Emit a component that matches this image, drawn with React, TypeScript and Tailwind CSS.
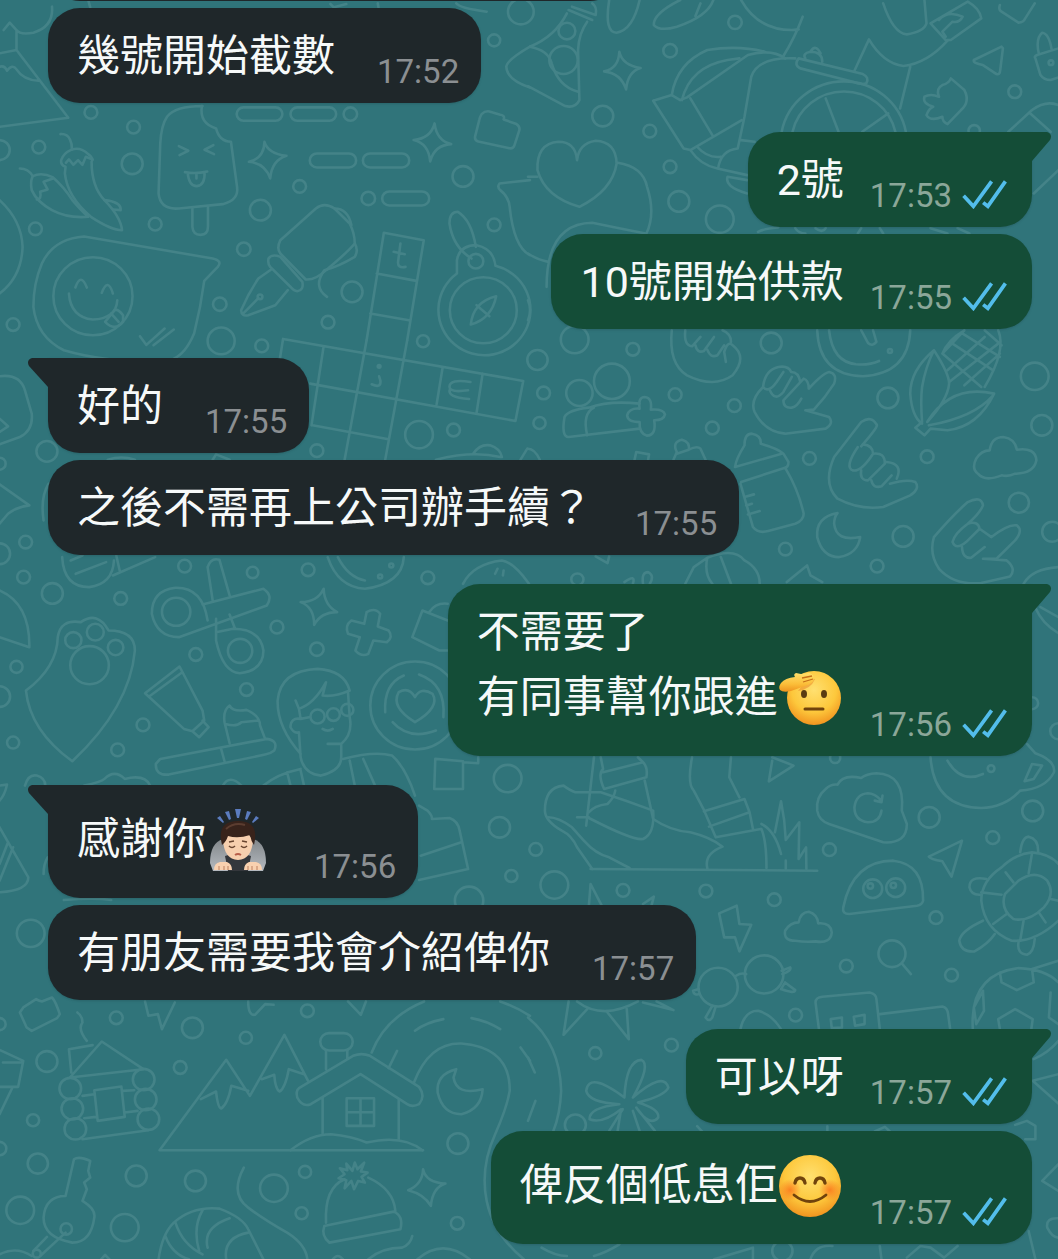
import type { ReactNode } from "react";

type Circle = [number, number, number];

type Tile = {
  x: number;
  y: number;
  circles: Circle[];
  paths: string[];
};

// doodle wallpaper, split in tiles that are drawn at three times their size
const tiles: Tile[] = [
  {
    x: 0,
    y: 0,
    circles: [
      [270, 337, 19], [396, 381, 19], [116, 441, 19], [392, 491, 31], [1037, 342, 20], [887, 559, 19],
      [1090, 595, 20], [1370, 529, 31], [771, 630, 31], [106, 686, 19], [460, 672, 19], [722, 747, 20],
      [1462, 674, 19], [1462, 121, 18], [651, 912, 20], [655, 1022, 40], [775, 1037, 19], [971, 966, 19],
      [1042, 875, 31], [1252, 1023, 18], [40, 973, 19], [0, 450, 30], [1541, 35, 38], [276, 888, 117],
      [1430, 930, 99], [1408, 783, 22], [770, 890, 7],
    ],
    paths: [
      "M721 322H816a20 20 0 0 1 0 40H721a20 20 0 0 1 0-40Z M880 322H975a20 20 0 0 1 0 40H880a20 20 0 0 1 0-40Z",
      "M938 460H1033a21 21 0 0 1 0 42H938a21 21 0 0 1 0-42Z M1095 460H1190a21 21 0 0 1 0 42H1095a21 21 0 0 1 0-42Z",
      "M1152 574H1249a21 21 0 0 1 0 42H1152a21 21 0 0 1 0-42Z",
      "M783 425Q793 460 848 467Q805 480 800 535Q785 490 737 485Q782 475 783 425Z",
      "M1286 370Q1292 422 1335 432Q1285 435 1273 484Q1268 430 1224 420Q1275 415 1286 370Z",
      "M600 318Q520 318 495 350Q478 375 475 430L470 580Q475 630 530 625L660 612Q708 600 702 560L684 425Q650 425 640 385Q590 370 598 318",
      "M570 625V680Q572 704 594 704Q616 704 616 680V618",
      "M530 438L558 452L532 465M632 435L606 449L634 462M548 516Q580 522 614 514M556 518Q560 558 583 558Q608 555 606 516M582 520V535",
      "M1425 342Q1435 332 1448 334L1480 344Q1495 346 1490 358L1528 372Q1540 380 1536 392L1522 436Q1518 448 1504 444L1415 424Q1403 420 1406 408L1418 360Q1420 350 1425 342Z",
      "M180 402Q200 400 208 418Q214 430 214 448M60 505Q85 505 98 528",
      "M195 500Q180 495 182 480Q188 460 214 448Q240 440 262 462Q280 475 272 485Q272 560 310 600Q358 650 362 690Q330 690 270 650Q200 590 193 520Z",
      "M196 488L205 478L218 494L232 480L245 494L255 470L275 478",
      "M98 528Q125 515 158 532Q190 560 215 600Q240 630 262 650Q200 655 155 630Q110 605 95 570Q90 545 98 528",
      "M110 598Q125 598 120 575L142 568L130 545L158 535M310 600Q360 605 358 630L335 628",
      "M330 1078Q250 1068 190 1050Q110 1010 100 920Q100 850 125 790Q160 715 250 709L630 775Q660 782 645 800L605 842Q595 920 575 1000Q550 1060 515 1075",
      "M224 862Q240 815 258 862M302 878Q320 830 335 880M205 880Q210 950 275 958Q345 955 348 900",
      "M312 965L340 930Q350 925 365 945V965Q340 995 312 965M330 940L352 965M415 1008L434 1034L488 985M455 1035L515 988",
      "M935 625Q960 605 990 625L1035 670Q1050 700 1050 730Q1030 755 965 810Q935 840 905 838L830 760Q818 745 830 720Z",
      "M990 625Q1030 625 1040 675M1050 730Q1062 750 1050 770Q1000 800 960 810Q925 860 968 890",
      "M795 775Q805 760 830 770L895 845Q900 870 880 873Q870 872 862 862L800 800Q792 790 795 775Z",
      "M803 808L765 835Q735 880 714 930Q715 950 735 945L815 915L852 870M720 940L765 894",
      "M1085 1020L1136 698L1254 720L1205 1020M1115 820L1232 842M1096 940L1210 960",
      "M1185 730L1178 785Q1176 805 1200 800M1165 755L1198 762",
      "M1352 820A136 136 0 1 0 1466 797Q1460 745 1410 735Q1360 735 1352 780V820",
      "M1395 775Q1340 740 1330 670Q1330 635 1355 635Q1395 660 1408 740",
      "M1468 888Q1400 905 1393 973Q1455 955 1468 888ZM1410 915L1448 948",
      "M1568 540L1478 550Q1470 560 1480 570Q1505 590 1508 620Q1520 740 1568 765",
      "M0 160L50 150V90L30 68L12 90M50 90Q60 105 100 98Q160 80 155 20M50 150L203 353L0 380M0 200Q15 195 22 212Q38 190 50 208Q70 240 115 242",
      "M0 600Q65 660 68 740Q65 830 0 880M262 0L268 22M978 12L988 22L1025 12M1118 10L1120 22M1350 10Q1360 25 1440 35",
      "M1568 140Q1500 180 1498 200Q1500 240 1568 262",
    ],
  },
  {
    x: 528,
    y: 0,
    circles: [
      [420, 152, 20], [612, 67, 20], [221, 348, 31], [360, 393, 19], [420, 500, 19], [446, 604, 31],
      [567, 657, 41], [1439, 275, 19], [1319, 392, 17], [115, 93, 25], [105, 180, 42], [1546, 188, 7],
    ],
    paths: [
      "M120 30L190 60M130 20L200 45Q205 20 190 10M175 65Q150 100 148 150L152 300Q140 325 110 318L0 258M115 40Q80 110 5 140Q60 150 70 190Q90 260 148 275",
      "M270 155Q278 195 333 204Q295 215 290 268Q275 220 225 214Q268 205 270 155Z",
      "M240 0Q225 98 262 98Q310 90 330 0M450 0Q370 40 372 75Q390 95 440 80Q530 50 548 0M510 10L495 48",
      "M630 0Q680 90 780 90L800 88M812 50Q790 110 755 168",
      "M425 285Q440 190 530 150Q620 135 700 155M455 300Q480 200 590 180L625 175",
      "M370 302L425 285L450 300L470 292L650 165Q720 145 760 175M370 302L460 445L480 450L632 360M480 295L545 405",
      "M790 175Q680 170 660 230L640 350L620 445Q570 450 562 505M480 450Q510 495 560 505L648 525M500 440Q530 475 570 470M630 420L670 425M648 540L590 530Q580 560 648 580",
      "M800 175L990 222Q1010 232 1000 250Q985 255 960 245L805 205Q785 195 800 175ZM820 175Q810 160 835 155Q870 155 870 185M835 155Q850 130 865 160",
      "M750 395A187 187 0 0 1 1117 395M782 395A156 156 0 0 1 1086 395M880 295L918 395M1065 340L988 395",
      "M965 212L1008 118Q1050 190 1110 198Q1180 190 1240 122M1130 200L1100 325M1050 10Q1080 100 1120 103Q1170 95 1178 70L1172 0",
      "M1190 70L1300 5Q1335 25 1340 55L1250 120H1235L1190 70M1215 60Q1240 30 1285 50Q1275 70 1255 65L1225 95L1235 110",
      "M1395 15Q1390 30 1400 35L1450 68Q1465 68 1470 55L1498 10",
      "M1400 140L1318 180Q1315 190 1345 195L1385 222Q1395 225 1396 210L1404 145Z",
      "M1568 145L1505 165Q1495 170 1500 175L1515 225Q1525 240 1545 240L1568 232M1510 160Q1500 115 1520 98Q1540 100 1548 148",
      "M1250 235L1290 270Q1308 305 1280 330L1240 372Q1225 365 1225 350Q1190 365 1178 345Q1185 325 1198 320Q1165 310 1172 290Q1190 280 1215 290Q1205 265 1225 255Q1245 250 1250 235Z",
      "M1420 395L1490 330Q1530 300 1568 315M1485 340L1545 395M1495 580L1568 510",
      "M145 480Q140 425 90 425Q25 430 28 510Q50 590 152 620Q250 570 262 490Q260 425 200 422Q150 430 145 480Z",
      "M265 488Q340 500 352 560Q378 640 350 700M0 530H28M55 860Q55 670 190 668Q270 685 348 700M0 760Q30 780 60 785M0 900Q12 930 0 960",
      "M680 695Q700 685 740 682M790 684Q800 700 820 700M850 684Q870 700 880 684M975 700L985 684M1040 684L1050 700M1190 684L1240 700M1270 684L1305 700",
    ],
  },
  {
    x: 0,
    y: 340,
    circles: [[140, 333, 31], [1240, 283, 41], [1342, 269, 19], [938, 331, 19], [77, 605, 19], [0, 370, 18], [0, 640, 31], [1122, 78, 4]],
    paths: [
      "M828 60L838 -4L1548 122L1525 242L918 130M925 255L1150 297M958 18L922 255M1085 0L1020 358M1205 0L1140 358M1310 80L1292 192M1428 100L1410 218",
      "M1392 125Q1330 115 1330 140Q1332 158 1385 150M1332 145Q1320 172 1388 176M1100 132Q1128 145 1126 122L1122 108",
      "M0 108Q60 100 75 150L95 220Q100 270 60 290L0 312M0 235L25 258L0 275M0 432L88 495Q50 500 25 520L0 550",
      "M130 540Q120 470 145 430M320 358Q360 345 400 358M630 358L640 342L680 358M1400 340Q1420 310 1450 315Q1480 325 1485 350M1290 358Q1400 330 1480 350M1540 358L1560 325",
    ],
  },
  {
    x: 528,
    y: 320,
    circles: [
      [138, 58, 41], [310, 87, 19], [719, 68, 31], [28, 119, 30], [46, 218, 19], [34, 308, 18], [435, 223, 19],
      [610, 256, 19], [545, 323, 19], [152, 218, 39], [248, 183, 53], [1064, 233, 31], [1498, 168, 41],
      [1519, 315, 31], [832, 414, 19], [1180, 409, 19], [1451, 547, 30], [1109, 648, 31], [761, 686, 19],
      [1032, 737, 19], [1550, 634, 30], [146, 777, 18], [1070, 92, 6], [1490, 1148, 18], [1568, 1232, 24],
    ],
    paths: [
      "M330 250Q240 240 180 262Q120 268 108 290Q98 350 120 350L330 325M175 345Q160 280 195 262",
      "M330 265Q325 230 345 230Q368 232 363 268Q400 265 405 282Q402 300 373 300Q380 345 352 346Q328 340 330 305Q295 305 293 285Q300 262 330 265Z",
      "M425 30Q415 130 470 165Q550 205 605 165Q650 110 605 75Q590 60 580 95L585 125M465 30Q460 75 485 78L510 50M495 75Q500 100 520 92L550 50M530 88Q540 115 560 105L580 75M575 30Q600 40 600 65",
      "M695 200Q700 150 740 140Q770 135 778 155M695 200Q655 240 670 275Q700 335 760 340L880 325Q905 310 890 290L820 270L845 268Q880 230 905 190Q915 160 890 155Q870 160 830 205Q830 180 815 175L755 240Q755 265 780 262Q795 260 808 235M695 200Q710 220 735 185L755 155M715 210Q730 245 755 215L780 170M778 155Q800 155 805 185",
      "M855 30Q860 165 990 168Q1125 160 1130 30M890 30Q900 125 970 132Q1010 135 1038 122M985 30L1005 68Q1018 80 1030 65L1020 30",
      "M1165 310Q1135 290 1130 220Q1130 150 1200 90Q1245 160 1245 190Q1240 240 1180 305Q1250 190 1378 220Q1330 320 1240 330L1190 325L1172 345L1145 322L1165 305Q1160 240 1165 200Q1175 140 1200 90M1185 315Q1320 290 1375 225",
      "M1225 100L1290 30M1240 150L1350 50M1245 185L1390 70M1290 195L1395 100M1225 100L1340 200M1255 70L1375 150M1285 40L1395 110M1350 30L1400 75M1225 100Q1240 60 1290 30M1390 30Q1415 90 1350 200",
      "M985 378Q1040 315 1030 312Q1015 285 985 305L905 410Q870 490 915 535Q980 570 1050 560L1130 525Q1160 505 1145 485Q1120 475 1070 490",
      "M975 380Q935 440 960 450Q985 455 1020 400Q1020 375 990 372M985 450Q980 480 1005 480L1055 430Q1055 395 1020 400M1015 480Q1020 505 1045 498L1075 465M1090 475Q1110 430 1060 425",
      "M640 375Q640 340 662 340Q690 345 688 370Q740 385 755 400L770 425Q770 440 760 442L630 485M612 440L750 400M640 375Q615 415 612 440M760 442Q800 510 815 580Q815 600 790 610L710 632Q680 640 665 620L628 490M640 530L668 522M645 555L662 550M650 582L685 572",
      "M430 418L440 395Q425 365 455 358Q480 365 475 388L440 400M475 388Q500 375 510 385L525 418M315 418L320 395L358 402L355 418M0 385Q20 385 35 418",
      "M1330 460Q1310 445 1325 415Q1340 390 1365 390Q1370 350 1405 350Q1440 355 1445 388Q1500 380 1503 420Q1495 460 1440 460Q1420 470 1400 465Q1350 485 1330 460Z",
      "M915 578Q850 590 855 650Q870 710 920 710Q975 700 982 650Q910 665 905 610Q905 590 915 578Z",
      "M1215 745Q1185 700 1200 650Q1260 580 1300 545Q1340 525 1345 555Q1335 580 1300 610Q1260 640 1255 665Q1265 690 1295 665L1335 625M1300 610Q1330 600 1335 625L1370 650Q1420 610 1445 615Q1465 630 1440 660L1385 715H1345L1415 720Q1445 745 1425 768L1340 788Q1260 795 1215 745M1283 680Q1285 715 1310 712L1350 680",
      "M1465 790Q1490 745 1568 740M465 790L490 740L530 712Q610 680 640 720Q685 745 685 790M530 712Q520 760 545 790M570 710L600 790M765 785L825 735L835 765L870 785",
      "M285 785Q320 760 310 790M340 790Q335 755 355 755Q375 765 360 790M200 708L235 728L240 708",
      "M1500 862Q1520 910 1568 938M1515 860L1568 890",
    ],
  },
  {
    x: 0,
    y: 540,
    circles: [
      [71, 110, 19], [156, 159, 31], [547, 77, 19], [358, 174, 19], [748, 96, 17], [912, 88, 19], [1266, 112, 19],
      [820, 260, 19], [580, 342, 19], [938, 326, 20], [730, 447, 19], [424, 553, 19], [349, 628, 19], [50, 379, 18],
      [40, 606, 18], [0, 468, 31], [1502, 714, 41], [1478, 860, 31], [1513, 1006, 18], [1388, 1080, 42],
      [522, 214, 42], [711, 331, 36], [283, 275, 25], [218, 299, 24], [343, 321, 23], [266, 374, 57],
      [1228, 495, 132], [940, 528, 21], [987, 522, 19], [1028, 508, 18], [1125, 108, 6], [1158, 75, 6], [92, 1178, 41],
    ],
    paths: [
      "M185 50Q190 140 265 140Q335 130 338 60M210 60L245 45M225 100L315 65M345 45L355 90M335 105L460 50",
      "M615 240Q600 140 520 142Q450 150 450 220Q465 290 530 290L790 195Q810 165 780 145L600 192M630 180L615 80Q625 50 650 58L680 165M640 235V300Q660 395 710 398Q780 390 780 330Q770 265 690 265L640 275M680 222L695 262",
      "M958 145Q960 195 998 215Q950 215 930 253Q930 200 890 185Q940 185 958 145Z",
      "M1085 215Q1110 200 1125 220L1118 258L1150 270Q1165 290 1145 305L1105 300L1090 340Q1070 350 1052 330L1065 290L1030 280Q1020 255 1040 240L1078 250Z",
      "M1325 330H1300L1220 290L1250 210L1325 240M1270 215Q1290 185 1325 190",
      "M215 662Q90 570 78 450Q170 380 172 290Q180 235 240 245Q290 210 322 270Q400 270 400 330Q385 500 215 662Z",
      "M532 378L430 458L545 565L570 572L605 540L600 510ZM442 468L540 395M570 572L590 590L618 560L600 540",
      "M475 655L790 595Q825 600 812 630Q800 640 785 642L500 702Q460 705 462 670ZM655 625L665 662M680 608L665 545Q660 510 680 495Q690 515 730 508Q770 525 770 555L785 595M668 550Q700 560 715 545L765 540",
      "M890 640Q820 560 822 480Q830 390 940 385Q1020 390 1035 450Q990 470 955 465L965 425Q930 490 885 505L875 480M1030 455L1035 530Q1045 580 1010 610H970M915 530L890 535Q860 530 860 560Q870 580 885 575L890 650Q900 700 950 705Q1010 690 1010 650V615M955 565Q970 575 985 565M885 505L890 535",
      "M780 735Q820 700 890 685M850 695L860 735M890 690L900 735M1015 655Q1110 630 1160 645Q1200 680 1228 765M1035 660L1050 735M1075 655L1110 735",
      "M1228 470Q1210 438 1180 455Q1155 500 1228 545Q1303 500 1280 460Q1245 438 1228 470ZM1140 515Q1135 430 1195 405M1240 402Q1320 430 1312 530M1162 545Q1210 600 1290 570",
      "M1288 655L1370 662V745H1285ZM1370 665L1415 668V650",
      "M250 735Q300 725 310 715Q340 685 370 715Q430 700 445 735M75 735Q85 700 110 705Q135 712 135 735M660 735Q680 700 715 735M0 735L22 732Q15 765 0 780M0 860L85 1010Q85 1050 0 1055M25 905L0 970M40 920L0 1020",
      "M1240 795L1265 810Q1280 825 1278 835L1330 832Q1355 840 1360 870L1385 985L1240 1018M1245 945L1365 905M0 150Q90 190 88 320L0 290",
      "M970 50Q1000 140 1080 145Q1190 130 1195 50M1000 50Q1030 110 1080 120M1370 130Q1400 70 1485 60Q1520 65 1565 130M1465 100L1472 85M1488 105L1490 90M130 1000Q130 970 142 950M190 1078Q280 1070 330 1078",
    ],
  },
  {
    x: 528,
    y: 740,
    circles: [
      [23, 326, 19], [78, 433, 41], [281, 449, 19], [526, 451, 19], [728, 477, 19], [891, 327, 19], [1186, 230, 31],
      [1492, 211, 31], [1374, 291, 19], [1206, 531, 19], [941, 676, 19], [1252, 703, 19], [791, 823, 19],
      [1019, 444, 28], [1087, 441, 28], [1012, 436, 8], [1080, 434, 8], [1076, 639, 40], [562, 739, 58],
      [698, 701, 57], [1369, 84, 10], [908, 52, 15],
    ],
    paths: [
      "M172 255L195 50M215 50L222 85Q205 100 225 145L350 110Q355 80 340 65L325 50M222 95L340 65",
      "M145 230H180M180 215Q195 195 235 190Q255 170 258 150M190 385L145 320Q130 285 100 270Q50 240 50 210Q50 140 105 135Q125 150 140 155H215Q290 180 370 210Q375 280 340 295Q310 300 180 232",
      "M345 120L370 235Q420 270 480 275Q540 290 575 318Q520 340 530 382M60 230Q90 230 130 260L165 300Q200 340 240 350L300 382M185 385L855 390",
      "M485 50Q470 130 490 150L520 208L555 290L688 265M600 50L595 110L625 170M520 212L640 175L655 215L535 258M655 215L665 265M690 265Q705 300 705 382",
      "M690 250Q730 270 748 340M730 275L748 182Q760 240 762 298L802 245L800 355L822 320L823 385M762 360V385",
      "M880 145Q850 170 855 210Q860 240 890 250L1050 305Q1120 310 1120 250L1105 210Q1115 100 1030 98Q1000 100 985 112Q930 100 915 132Q895 130 880 145Z",
      "M1045 210Q1040 245 1005 245Q965 240 965 200Q970 160 1005 158Q1025 158 1045 180M1048 165L1045 185L1025 180",
      "M1190 50Q1200 200 1340 202Q1410 200 1455 150Q1530 145 1555 95Q1560 60 1500 38L1475 10M1240 60Q1280 130 1345 100M1490 70L1520 75L1495 115L1468 122Z",
      "M722 50L785 75L712 122L722 60M1283 300L1185 348Q1190 355 1225 362L1252 408Z",
      "M932 500Q960 360 1080 360Q1170 370 1168 480Q1165 492 1150 495L950 520Q928 520 932 500Z",
      "M565 518L617 495L625 550L660 552L625 632L612 590H580Z",
      "M790 600Q755 600 760 570Q775 545 800 545Q805 515 830 513Q855 520 858 548Q895 545 898 575Q895 610 850 602Q820 605 790 600Z",
      "M1105 668L1132 700M615 705Q630 695 645 700M750 690L775 680Q780 690 752 700M748 745L760 725L790 748Q790 760 748 745M545 795L525 830Q535 845 545 830L555 797M505 745L488 750Q490 765 508 760",
      "M180 495L185 430L218 495M340 490L372 468L365 495M120 782L105 882L175 805M145 782Q220 840 325 782M235 815L298 895L292 805M380 782L430 808L340 785",
      "M1568 370Q1545 340 1490 335Q1440 340 1400 380Q1340 420 1340 480Q1350 570 1430 600Q1500 605 1568 540",
      "M1410 460L1450 420Q1500 385 1535 420Q1560 460 1525 500Q1480 545 1435 535Q1395 505 1410 460Z",
      "M1412 395L1435 425M1490 338L1480 398M1340 455L1400 462M1375 550L1415 520M1465 540L1455 600M1510 515L1530 545M1545 475L1568 480",
      "M1455 335Q1460 290 1480 288Q1510 295 1508 335M1355 415Q1305 405 1305 440Q1310 465 1340 462M1345 540Q1280 570 1275 600Q1280 635 1320 632Q1360 610 1380 580M1450 605Q1445 640 1475 642Q1495 635 1498 595",
      "M1315 865Q1305 700 1450 682Q1530 685 1568 725M1395 695L1400 725L1445 748L1495 725L1490 685L1568 660M1395 865L1390 835L1440 805L1492 835L1488 865M1345 750L1348 810L1325 850L1318 800ZM1545 755L1540 830L1568 850",
      "M860 865L850 785Q850 770 870 768L1010 755Q1030 760 1030 775L1040 865M895 835L928 830V860L898 862ZM963 828L995 822V850L967 855ZM1040 820L1225 797Q1240 800 1242 820L1248 865M628 865Q640 810 680 810Q720 820 748 865",
    ],
  },
  {
    x: 0,
    y: 980,
    circles: [
      [345, 111, 19], [570, 141, 31], [728, 171, 18], [910, 90, 19], [534, 260, 19], [140, 242, 31], [99, 418, 18],
      [113, 548, 30], [404, 585, 31], [579, 600, 31], [811, 622, 41], [903, 573, 18], [893, 697, 18],
      [1353, 727, 19], [370, 740, 41], [61, 688, 41], [1355, 488, 31], [0, 503, 20], [197, 744, 17], [0, 130, 18],
      [209, 323, 32], [215, 384, 32], [224, 444, 32], [426, 296, 32], [432, 356, 32], [440, 415, 32], [110, 818, 12],
    ],
    paths: [
      "M70 80L108 55Q115 60 125 62L155 50Q165 60 178 100L170 112L95 150L80 140L60 95ZM230 95Q245 105 245 125Q230 145 258 180",
      "M208 290L302 182L425 265ZM212 275L205 205L275 193M245 345L280 340M250 412L285 408M280 328L360 317L370 408L290 420ZM362 330L398 328M370 395L408 390M245 475L440 448",
      "M430 62L440 105L468 100L480 145L518 65M735 62Q735 105 755 102L785 70L810 72M1030 62L1068 102L1083 62",
      "M912 300L842 162L740 345L670 237L473 508H1252M595 355L640 332Q645 380 655 383Q675 370 685 315L735 330M775 295L812 282Q815 325 828 332Q845 320 855 265L900 280",
      "M885 322L1045 225Q1070 215 1095 225L1240 318Q1260 345 1240 370Q1220 380 1205 370L1067 280L920 370Q895 380 880 350Q875 330 885 322ZM955 350V460M1180 355V475M965 265V212M1028 235V208",
      "M974 157H1018a26 26 0 0 1 0 52H974a26 26 0 0 1 0-52ZM1026 352H1107V435H1026ZM1067 352V435M1026 394H1107M860 508Q920 460 980 460Q1040 465 1085 485Q1190 460 1250 508",
      "M1100 215Q1140 110 1255 62M1150 262L1175 210M1225 305Q1270 185 1365 188Q1510 200 1508 330Q1500 380 1465 460Q1420 560 1440 660Q1460 760 1550 835M1228 150Q1260 125 1312 115M1395 112Q1440 120 1480 145M1480 62Q1530 80 1568 105M1540 200L1568 240",
      "M1350 265Q1290 280 1295 335Q1310 400 1365 400Q1425 385 1428 325Q1350 345 1342 290Z",
      "M0 207L70 240L55 318H0M10 245H68M38 320L0 400",
      "M195 645L220 535Q235 525 268 540L262 570L268 590L250 605L258 625L245 660Q285 685 280 710Q270 785 215 785Q130 770 130 710Q135 645 195 645ZM100 810L140 768M120 825L195 755M0 820Q50 795 95 825",
      "M470 835Q480 760 515 725Q570 675 650 683Q720 710 735 745L780 835M490 765Q510 820 560 835M520 725Q540 790 600 820M600 688Q570 740 590 810M680 712Q600 740 615 800M735 755Q660 770 670 835",
      "M722 560Q680 640 735 680Q780 715 850 755Q905 790 910 835",
      "M965 725Q960 620 1020 595M1090 590Q1165 625 1170 690M970 733L1165 692Q1195 705 1185 745L975 785Q950 765 960 735Z",
      "M1043 570L1050 545L1058 565L1078 545L1068 572L1088 575L1070 588L1080 605L1060 600L1048 625L1040 600L1020 622L1025 598L1002 592L1020 580L1006 562L1028 568L1025 548Z",
      "M1252 565Q1260 605 1318 608Q1280 620 1275 675Q1255 640 1208 628Q1250 610 1252 565Z",
      "M1090 835Q1130 800 1190 800Q1215 790 1220 765M1235 835Q1310 770 1390 835M985 835Q1000 815 1015 835M300 835L312 822L325 835",
    ],
  },
  {
    x: 528,
    y: 980,
    circles: [[424, 193, 19], [199, 217, 18], [140, 432, 31], [752, 810, 30]],
    paths: [
      "M0 110Q95 190 98 330Q95 400 75 450M0 230L20 275M22 360L0 420",
      "M285 350Q290 240 335 237Q365 250 310 350Q400 270 415 320Q405 345 325 365Q390 385 385 410Q360 440 320 380L375 450M310 390L330 450M265 450L275 385Q220 430 182 415Q180 380 270 370Q180 365 172 330Q180 270 285 350M280 385L240 450",
      "M1568 280L1492 300L1568 368M1495 235Q1540 215 1568 180M1440 432L1475 420L1500 435V475H1470M1568 550L1520 600L1568 630M1568 712Q1530 710 1535 740Q1550 770 1568 770M1480 750L1500 835",
      "M40 800Q80 825 115 825M195 825Q230 815 270 790M550 835L665 800V835M835 835Q850 790 900 795M1040 795L1045 835M1120 830L1160 795L1190 800L1230 830L1270 795M500 436L515 452M885 436V452M1025 452L1055 438L1070 452",
    ],
  },
];

function Wallpaper() {
  return (
    <svg
      aria-hidden="true"
      viewBox="0 0 1058 1259"
      preserveAspectRatio="xMidYMin slice"
      className="absolute inset-0 h-full w-full text-[#448388]"
      fill="none"
      stroke="currentColor"
      strokeWidth="2.6"
      strokeLinejoin="round"
      strokeLinecap="round"
    >
      {tiles.map((tile) => (
        <g key={`${tile.x}-${tile.y}`} transform={`translate(${tile.x} ${tile.y}) scale(0.338 0.3333)`}>
          {tile.circles.map(([cx, cy, r]) => (
            <circle key={`${cx}-${cy}`} cx={cx} cy={cy} r={r} vectorEffect="non-scaling-stroke" />
          ))}
          {tile.paths.map((d) => (
            <path key={d} d={d} vectorEffect="non-scaling-stroke" />
          ))}
        </g>
      ))}
    </svg>
  );
}

function Ticks() {
  return (
    <svg
      role="img"
      aria-label="已讀"
      viewBox="0 0 132 86"
      className="mb-1 h-[29px] w-[45px]"
      fill="none"
      stroke="#53bdeb"
      strokeWidth="11"
      strokeLinecap="butt"
    >
      <path d="M4 47L33 78L87 4" />
      <path d="M62 67L76 78L128 4" />
    </svg>
  );
}

function FaceGradient({ id }: { id: string }) {
  return (
    <radialGradient id={id} cx="0.5" cy="0.35" r="0.68">
      <stop offset="0" stopColor="#ffe070" />
      <stop offset="0.6" stopColor="#fdc83c" />
      <stop offset="1" stopColor="#f08e1c" />
    </radialGradient>
  );
}

function SmileEmoji() {
  return (
    <svg role="img" aria-label="😊" viewBox="0 0 66 64" className="h-[64px] w-[66px]">
      <defs>
        <FaceGradient id="smile" />
        <radialGradient id="blush">
          <stop offset="0" stopColor="#fa6a18" stopOpacity="0.75" />
          <stop offset="1" stopColor="#fa6a18" stopOpacity="0" />
        </radialGradient>
      </defs>
      <circle cx="32" cy="32" r="31" fill="url(#smile)" />
      <circle cx="12" cy="36" r="11" fill="url(#blush)" />
      <circle cx="52" cy="36" r="11" fill="url(#blush)" />
      <g fill="none" stroke="#70430c" strokeLinecap="round">
        <path d="M17 29Q18 24 22 24Q26 24 27 29" strokeWidth="3.4" />
        <path d="M37 29Q38 24 42 24Q46 24 47 29" strokeWidth="3.4" />
        <path d="M16 41Q32 54 48 41" strokeWidth="2.8" />
      </g>
    </svg>
  );
}

function SaluteEmoji() {
  return (
    <svg role="img" aria-label="🫡" viewBox="0 0 66 64" className="h-[64px] w-[66px]">
      <defs>
        <FaceGradient id="salute" />
        <linearGradient id="hand" x1="0" y1="0" x2="0" y2="1">
          <stop offset="0" stopColor="#ffe06a" />
          <stop offset="0.6" stopColor="#fbbd38" />
          <stop offset="1" stopColor="#ee931f" />
        </linearGradient>
      </defs>
      <circle cx="36" cy="32" r="27" fill="url(#salute)" />
      <path d="M20 25Q33 23 37 13L30 12Z" fill="#e8892b" opacity="0.55" />
      <path
        d="M3 17Q0 21 2 24Q5 27 13 25L27 20Q35 18 36 13Q36 8 31 7L23 8L18 7Q15 8 17 11Q7 12 3 17Z"
        fill="url(#hand)"
      />
      <path d="M24 12L34 10M25 16L35 13" stroke="#c56f16" strokeWidth="1.3" fill="none" />
      <ellipse cx="26" cy="28" rx="3" ry="4" fill="#5a3c12" />
      <ellipse cx="46" cy="28" rx="3" ry="4" fill="#5a3c12" />
      <path d="M27 43H45" stroke="#70430c" strokeWidth="3" strokeLinecap="round" />
    </svg>
  );
}

function BowEmoji() {
  return (
    <svg role="img" aria-label="🙇🏻" viewBox="0 0 66 64" className="h-[64px] w-[66px]">
      <defs>
        <linearGradient id="sleeve" x1="0" y1="0" x2="0" y2="1">
          <stop offset="0" stopColor="#82878a" />
          <stop offset="1" stopColor="#b5bac0" />
        </linearGradient>
      </defs>
      <g fill="#5b7cbf">
        <path d="M29 1H35L33 10H31Z" />
        <path d="M19 4L23 3L25 11L23 12Z" />
        <path d="M45 4L41 3L39 11L41 12Z" />
        <path d="M11 10L14 8L18 14L17 15Z" />
        <path d="M53 10L50 8L46 14L47 15Z" />
      </g>
      <path d="M17 31Q4 35 4 55L7 63H57L60 55Q60 35 47 31Z" fill="url(#sleeve)" />
      <path d="M19 48L32 44L45 48L42 63H22Z" fill="#34373c" />
      <path d="M17 32Q18 51 32 52Q46 51 47 32L40 23H24Z" fill="#f7cfae" />
      <path d="M16 37Q10 13 32 13Q54 13 48 37Q45 33 44 27Q32 31 22 28Q20 34 16 37Z" fill="#38231b" />
      <path d="M20 21Q28 14 39 17" stroke="#5b3d30" strokeWidth="2" fill="none" />
      <g fill="none" stroke="#68442f" strokeWidth="1.5">
        <path d="M23 38Q26 41 29 38M35 38Q38 41 41 38M23 34L28 33M36 33L41 34" />
      </g>
      <path d="M29 47Q32 45 35 47" stroke="#b85f4a" strokeWidth="2" fill="none" />
      <path d="M8 62Q8 55 14 54H21Q26 56 26 62Z" fill="#f9d1b0" />
      <path d="M38 62Q38 56 43 54H50Q56 55 56 62Z" fill="#f9d1b0" />
      <path d="M13 62V58M18 62V58M22 62V58M42 62V58M46 62V58M51 62V58" stroke="#bd8060" strokeWidth="1" />
    </svg>
  );
}

function Tail({ side }: { side: "in" | "out" }) {
  if (side === "in") {
    return (
      <svg aria-hidden="true" viewBox="0 0 20 30" className="absolute top-0 right-full h-[30px] w-[20px]">
        <path d="M20 0H4Q-2 2 1 8L20 29Z" fill="#1f272a" />
      </svg>
    );
  }
  return (
    <svg aria-hidden="true" viewBox="0 0 20 30" className="absolute top-0 left-full h-[30px] w-[20px]">
      <path d="M0 0H15Q21 2 18 8L0 29Z" fill="#144d37" />
    </svg>
  );
}

type Message = {
  side: "in" | "out";
  time: string;
  first?: boolean;
  lines: { text: string; emoji?: ReactNode }[];
};

const messages: Message[] = [
  { side: "in", time: "17:52", lines: [{ text: "幾號開始截數" }] },
  { side: "out", time: "17:53", first: true, lines: [{ text: "2號" }] },
  { side: "out", time: "17:55", lines: [{ text: "10號開始供款" }] },
  { side: "in", time: "17:55", first: true, lines: [{ text: "好的" }] },
  { side: "in", time: "17:55", lines: [{ text: "之後不需再上公司辦手續？" }] },
  {
    side: "out",
    time: "17:56",
    first: true,
    lines: [{ text: "不需要了" }, { text: "有同事幫你跟進", emoji: <SaluteEmoji /> }],
  },
  { side: "in", time: "17:56", first: true, lines: [{ text: "感謝你", emoji: <BowEmoji /> }] },
  { side: "in", time: "17:57", lines: [{ text: "有朋友需要我會介紹俾你" }] },
  { side: "out", time: "17:57", first: true, lines: [{ text: "可以呀" }] },
  { side: "out", time: "17:57", lines: [{ text: "俾反個低息佢", emoji: <SmileEmoji /> }] },
];

function Bubble({ message }: { message: Message }) {
  const { side, time, first, lines } = message;
  const out = side === "out";

  return (
    <li
      className={`relative flex items-end rounded-[32px] pl-[29px] shadow-sm ${
        out ? "self-end bg-[#144d37] pr-[25px]" : "self-start bg-[#1f272a] pr-[22px]"
      } ${first ? (out ? "mt-[29px] rounded-tr-none" : "mt-[29px] rounded-tl-none") : "mt-[7px]"}`}
    >
      {first && <Tail side={side} />}
      <div className="pt-4 pb-5 text-[43px] text-[#f6f9f9]">
        {lines.map((line) => (
          <p key={line.text} className={`flex items-center ${line.emoji ? "h-[77px]" : "h-[59px] pt-1.5"}`}>
            {line.text}
            {line.emoji}
          </p>
        ))}
      </div>
      <div
        className={`flex items-end pb-[14px] text-[33px] leading-[34px] ${
          out ? "ml-[26px] gap-[10px] text-[#8ba799]" : "ml-[42px] text-[#8b8f92]"
        }`}
      >
        <time>{time}</time>
        {out && <Ticks />}
      </div>
    </li>
  );
}

export default function App() {
  return (
    <main className="relative min-h-screen overflow-hidden bg-[#30747a] font-[Roboto,'Noto_Sans_CJK_TC',sans-serif]">
      <Wallpaper />
      <div aria-hidden="true" className="relative -mt-[94px] ml-12 h-[95px] w-[574px] rounded-[32px] bg-[#1f272a]" />
      <ol lang="zh-Hant" className="relative flex flex-col pr-[26px] pb-4 pl-12">
        {messages.map((message, index) => (
          <Bubble key={index} message={message} />
        ))}
      </ol>
    </main>
  );
}
